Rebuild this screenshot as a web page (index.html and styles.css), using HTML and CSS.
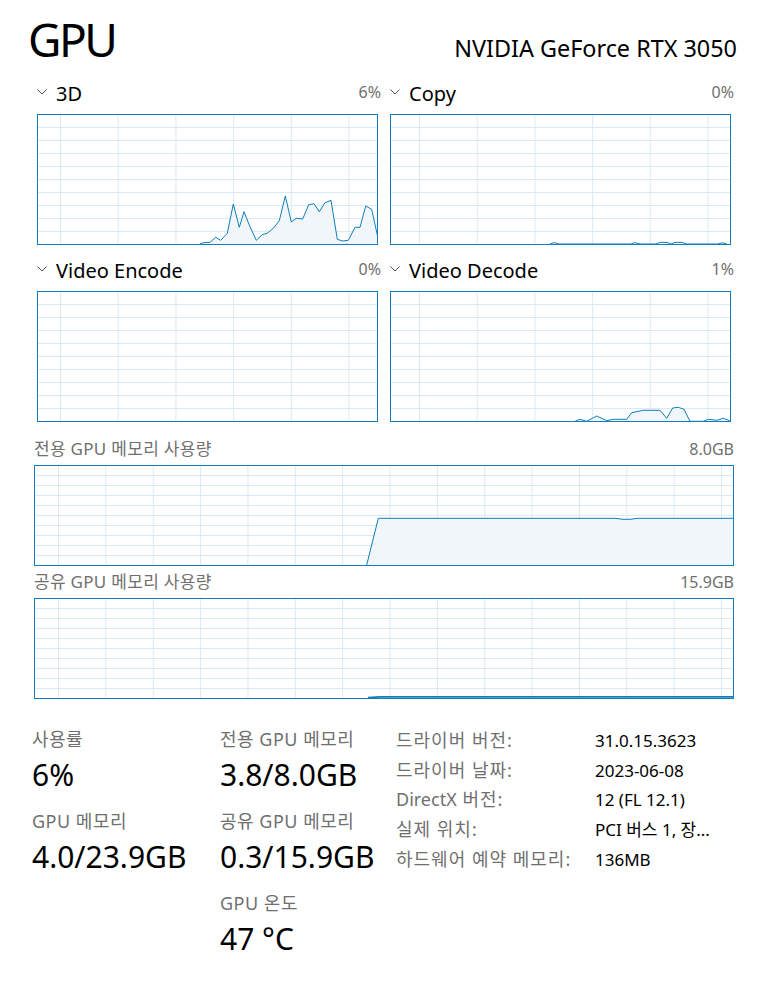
FILE: index.html
```html
<!DOCTYPE html>
<html lang="ko">

<head>
  <meta charset="UTF-8">
  <meta name="viewport" content="width=device-width, initial-scale=1.0">
  <title>GPU</title>
  <link rel="stylesheet" href="styles.css">
</head>

<body>
  <div class="page">

    <div class="pageHeader">
      <h1 class="pageTitle">GPU</h1>
      <div class="deviceName">NVIDIA GeForce RTX 3050</div>
    </div>

    <!-- engine graphs -->
    <div class="engineGrid">

      <div class="engine">
        <div class="engineHead">
          <svg class="chevron" width="11" height="7" viewBox="0 0 11 7"><polyline points="0.5,0.5 5,5 9.5,0.5" /></svg>
          <span class="engineName">3D</span>
          <span class="enginePct">6%</span>
        </div>
        <svg class="chart" width="341" height="131" viewBox="0 0 341 131">
          <defs>
            <pattern id="grid3d" patternUnits="userSpaceOnUse" x="23" y="0" width="57.7" height="13">
              <path class="gridLine" d="M0.5 0V13M0 0.5H57.7" />
            </pattern>
          </defs>
          <rect width="341" height="131" fill="url(#grid3d)" />
          <polygon class="area" points="163,130 166.3,128.7 173,128.3 178.7,123.3 183.7,126.3 190.3,119.3 196.3,90 202.3,113.3 207,97.7 213,112.7 219.3,126.3 225.3,120.7 230.7,119 236.3,114.3 242.3,106.7 248.3,82 254.3,108 259.3,104.3 265.7,105 271.7,90.7 277,89.7 282.3,97.7 288,88.7 294,86.3 300.3,125.3 305.7,127 311.3,126.3 318,113.3 323,113.3 328.7,92 334.7,95.3 340.3,121 340.3,130" />
          <polyline class="trace" points="163,130 166.3,128.7 173,128.3 178.7,123.3 183.7,126.3 190.3,119.3 196.3,90 202.3,113.3 207,97.7 213,112.7 219.3,126.3 225.3,120.7 230.7,119 236.3,114.3 242.3,106.7 248.3,82 254.3,108 259.3,104.3 265.7,105 271.7,90.7 277,89.7 282.3,97.7 288,88.7 294,86.3 300.3,125.3 305.7,127 311.3,126.3 318,113.3 323,113.3 328.7,92 334.7,95.3 340.3,121" />
          <rect class="frame" x="0.5" y="0.5" width="340" height="130" />
        </svg>
      </div>

      <div class="engine">
        <div class="engineHead">
          <svg class="chevron" width="11" height="7" viewBox="0 0 11 7"><polyline points="0.5,0.5 5,5 9.5,0.5" /></svg>
          <span class="engineName">Copy</span>
          <span class="enginePct">0%</span>
        </div>
        <svg class="chart" width="341" height="131" viewBox="0 0 341 131">
          <defs>
            <pattern id="gridCopy" patternUnits="userSpaceOnUse" x="29" y="0" width="57.7" height="13">
              <path class="gridLine" d="M0.5 0V13M0 0.5H57.7" />
            </pattern>
          </defs>
          <rect width="341" height="131" fill="url(#gridCopy)" />
          <polyline class="trace" points="160,130 164,128.6 169,130 241,130 245,128.6 250,130 266,130 270,128.4 277,128.4 281,130 285,128.4 292,128.4 296,130 328,130 332,128.8 337,130" />
          <rect class="frame" x="0.5" y="0.5" width="340" height="130" />
        </svg>
      </div>

      <div class="engine">
        <div class="engineHead">
          <svg class="chevron" width="11" height="7" viewBox="0 0 11 7"><polyline points="0.5,0.5 5,5 9.5,0.5" /></svg>
          <span class="engineName">Video Encode</span>
          <span class="enginePct">0%</span>
        </div>
        <svg class="chart" width="341" height="131" viewBox="0 0 341 131">
          <defs>
            <pattern id="gridEnc" patternUnits="userSpaceOnUse" x="23" y="0" width="57.7" height="13">
              <path class="gridLine" d="M0.5 0V13M0 0.5H57.7" />
            </pattern>
          </defs>
          <rect width="341" height="131" fill="url(#gridEnc)" />
          <rect class="frame" x="0.5" y="0.5" width="340" height="130" />
        </svg>
      </div>

      <div class="engine">
        <div class="engineHead">
          <svg class="chevron" width="11" height="7" viewBox="0 0 11 7"><polyline points="0.5,0.5 5,5 9.5,0.5" /></svg>
          <span class="engineName">Video Decode</span>
          <span class="enginePct">1%</span>
        </div>
        <svg class="chart" width="341" height="131" viewBox="0 0 341 131">
          <defs>
            <pattern id="gridDec" patternUnits="userSpaceOnUse" x="29" y="0" width="57.7" height="13">
              <path class="gridLine" d="M0.5 0V13M0 0.5H57.7" />
            </pattern>
          </defs>
          <rect width="341" height="131" fill="url(#gridDec)" />
          <polygon class="area" points="185,130.3 190,128.3 196.7,130.3 206.7,125 216.7,129.7 223.3,128.3 236.7,128.3 241.7,121.7 253.3,119.3 270,119.3 276.7,127.3 282.7,117 288.3,116.3 294,118.3 300,130.3 313.3,130.3 318.3,128.3 326.7,129.3 333.3,127.3 339.7,129.7 339.7,130.3" />
          <polyline class="trace" points="185,130.3 190,128.3 196.7,130.3 206.7,125 216.7,129.7 223.3,128.3 236.7,128.3 241.7,121.7 253.3,119.3 270,119.3 276.7,127.3 282.7,117 288.3,116.3 294,118.3 300,130.3 313.3,130.3 318.3,128.3 326.7,129.3 333.3,127.3 339.7,129.7" />
          <rect class="frame" x="0.5" y="0.5" width="340" height="130" />
        </svg>
      </div>

    </div>

    <!-- memory graphs -->
    <div class="memBlock">
      <div class="memHead">
        <span class="memName">전용 GPU 메모리 사용량</span>
        <span>8.0GB</span>
      </div>
      <svg class="chart" width="700" height="101" viewBox="0 0 700 101">
        <defs>
          <pattern id="gridDed" patternUnits="userSpaceOnUse" x="24" y="0" width="47.36" height="10">
            <path class="gridLine" d="M0.5 0V10M0 0.5H47.36" />
          </pattern>
        </defs>
        <rect width="700" height="101" fill="url(#gridDed)" />
        <polygon class="area" points="332.7,100 344.3,53.3 581,53.3 589,54.3 596,54.3 604,53.3 700,53.3 700,100" />
        <polyline class="trace" points="332.7,100 344.3,53.3 581,53.3 589,54.3 596,54.3 604,53.3 700,53.3" />
        <rect class="frame" x="0.5" y="0.5" width="699" height="100" />
      </svg>
    </div>

    <div class="memBlock">
      <div class="memHead">
        <span class="memName">공유 GPU 메모리 사용량</span>
        <span>15.9GB</span>
      </div>
      <svg class="chart" width="700" height="101" viewBox="0 0 700 101">
        <defs>
          <pattern id="gridShared" patternUnits="userSpaceOnUse" x="24" y="0" width="47.36" height="10">
            <path class="gridLine" d="M0.5 0V10M0 0.5H47.36" />
          </pattern>
        </defs>
        <rect width="700" height="101" fill="url(#gridShared)" />
        <polyline class="trace thick" points="334,99.6 346,98.9 700,98.9" />
        <rect class="frame" x="0.5" y="0.5" width="699" height="100" />
      </svg>
    </div>

    <!-- numbers -->
    <div class="stats">
      <div class="statCol">
        <div class="stat">
          <div class="statLabel">사용률</div>
          <div class="statValue">6%</div>
        </div>
        <div class="stat">
          <div class="statLabel">GPU 메모리</div>
          <div class="statValue">4.0/23.9GB</div>
        </div>
      </div>

      <div class="statCol">
        <div class="stat">
          <div class="statLabel">전용 GPU 메모리</div>
          <div class="statValue">3.8/8.0GB</div>
        </div>
        <div class="stat">
          <div class="statLabel">공유 GPU 메모리</div>
          <div class="statValue">0.3/15.9GB</div>
        </div>
        <div class="stat">
          <div class="statLabel">GPU 온도</div>
          <div class="statValue">47 °C</div>
        </div>
      </div>

      <div class="infoTable">
        <span class="infoKey">드라이버 버전:</span><span class="infoVal">31.0.15.3623</span>
        <span class="infoKey">드라이버 날짜:</span><span class="infoVal">2023-06-08</span>
        <span class="infoKey"><span class="latin">DirectX</span> 버전:</span><span class="infoVal">12 (FL 12.1)</span>
        <span class="infoKey">실제 위치:</span><span class="infoVal">PCI 버스 1, 장...</span>
        <span class="infoKey">하드웨어 예약 메모리:</span><span class="infoVal">136MB</span>
      </div>
    </div>

  </div>
</body>

</html>
```

FILE: styles.css
```css
body {
  margin: 0;
  background: #ffffff;
  color: #000000;
  font-family: "Noto Sans", "Noto Sans CJK KR", sans-serif;
}

.page {
  width: 767px;
  box-sizing: border-box;
  padding: 0 33px 0 34px;
}

.pageHeader {
  display: flex;
  justify-content: space-between;
  align-items: baseline;
  padding-top: 11px;
  margin: 0 -3px 0 -6px;
}

.pageTitle {
  margin: 0;
  font-size: 46px;
  font-weight: 400;
  line-height: 56px;
  letter-spacing: -2.5px;
}

.deviceName {
  font-size: 23.4px;
}

.engineGrid {
  display: grid;
  grid-template-columns: 344px 344px;
  column-gap: 9px;
  row-gap: 13px;
  margin-top: 14px;
  padding-left: 3px;
}

.engineHead {
  display: flex;
  align-items: center;
  height: 24px;
  margin-bottom: 9px;
}

.chevron {
  margin-right: 8px;
  margin-bottom: 2px;
}

.chevron polyline {
  fill: none;
  stroke: #505050;
  stroke-width: 1;
}

.engineName {
  font-size: 20px;
}

.enginePct {
  margin-left: auto;
  font-size: 16px;
  color: #707070;
  padding-bottom: 2px;
}

.chart {
  display: block;
}

.gridLine {
  fill: none;
  stroke: #d9eaf4;
  stroke-width: 1;
}

.area {
  fill: #f1f6fa;
  stroke: none;
}

.trace {
  fill: none;
  stroke: #117dbb;
  stroke-width: 1;
}

.trace.thick {
  stroke-width: 1.8;
}

.frame {
  fill: none;
  stroke: #117dbb;
  stroke-width: 1;
}

.memBlock {
  margin-top: 17px;
}

.memBlock + .memBlock {
  margin-top: 6px;
}

.memHead {
  display: flex;
  justify-content: space-between;
  font-size: 16px;
  line-height: 20px;
  color: #707070;
  margin-bottom: 6px;
}

.memName {
  font-size: 17px;
  letter-spacing: 0.3px;
}

.stats {
  display: grid;
  grid-template-columns: 188px 176px auto;
  align-items: start;
  margin: 28px 0 0 -2px;
}

.stat {
  margin-bottom: 14px;
}

.statLabel {
  font-size: 18px;
  line-height: 24px;
  letter-spacing: 0.5px;
  color: #707070;
}

.statValue {
  margin-top: 4px;
  font-size: 30px;
  line-height: 40px;
}

.infoTable {
  display: grid;
  grid-template-columns: 199px auto;
  margin-top: -1px;
  line-height: 29.7px;
}

.infoKey {
  font-size: 18px;
  letter-spacing: 1px;
  color: #707070;
}

.infoKey .latin {
  letter-spacing: 0;
}

.infoVal {
  font-size: 17px;
  white-space: nowrap;
}
```
